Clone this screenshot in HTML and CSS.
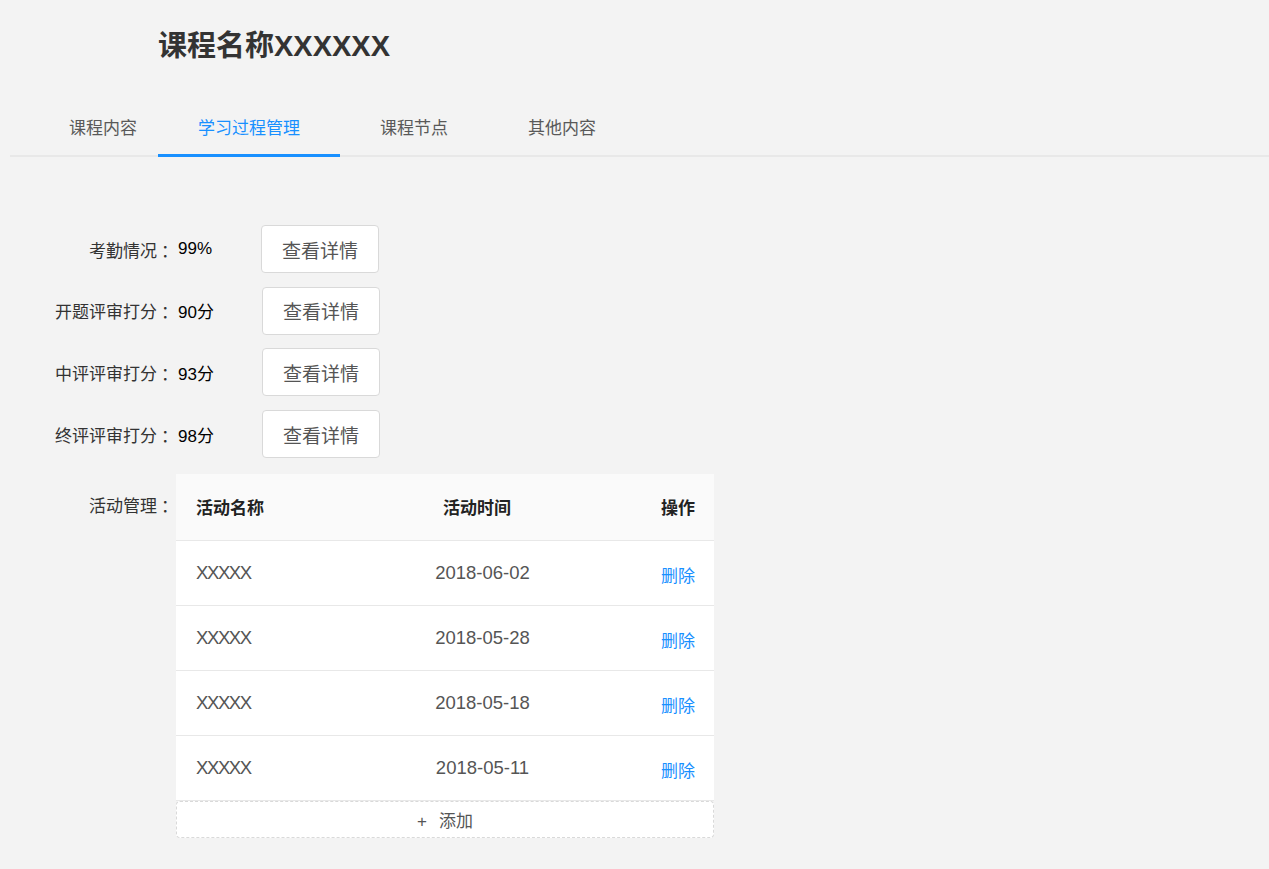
FILE: index.html
```html
<!DOCTYPE html>
<html lang="zh-CN">
<head>
<meta charset="utf-8">
<title>课程名称XXXXXX</title>
<link rel="stylesheet" href="styles.css">
</head>
<body>
<div class="page">
  <h1 class="title">课程名称XXXXXX</h1>
  <div class="tabs">
    <div class="tab tab-first">课程内容</div>
    <div class="tab active">学习过程管理</div>
    <div class="tab">课程节点</div>
    <div class="tab">其他内容</div>
  </div>
  <div class="form">
    <div class="row">
      <div class="label">考勤情况<span class="colon">：</span></div>
      <div class="value value-first">99%</div>
      <button class="btn">查看详情</button>
    </div>
    <div class="row">
      <div class="label">开题评审打分<span class="colon">：</span></div>
      <div class="value">90分</div>
      <button class="btn">查看详情</button>
    </div>
    <div class="row">
      <div class="label">中评评审打分<span class="colon">：</span></div>
      <div class="value">93分</div>
      <button class="btn">查看详情</button>
    </div>
    <div class="row">
      <div class="label">终评评审打分<span class="colon">：</span></div>
      <div class="value">98分</div>
      <button class="btn">查看详情</button>
    </div>
    <div class="row row-table">
      <div class="label label-table">活动管理<span class="colon">：</span></div>
      <div class="table-wrap">
        <div class="table">
          <div class="tr thead">
            <div class="td c1">活动名称</div>
            <div class="td c2 th-time">活动时间</div>
            <div class="td c3">操作</div>
          </div>
          <div class="tr">
            <div class="td c1 xname">XXXXX</div>
            <div class="td c2">2018-06-02</div>
            <div class="td c3"><a class="link">删除</a></div>
          </div>
          <div class="tr">
            <div class="td c1 xname">XXXXX</div>
            <div class="td c2">2018-05-28</div>
            <div class="td c3"><a class="link">删除</a></div>
          </div>
          <div class="tr">
            <div class="td c1 xname">XXXXX</div>
            <div class="td c2">2018-05-18</div>
            <div class="td c3"><a class="link">删除</a></div>
          </div>
          <div class="tr">
            <div class="td c1 xname">XXXXX</div>
            <div class="td c2">2018-05-11</div>
            <div class="td c3"><a class="link">删除</a></div>
          </div>
        </div>
        <button class="add"><span class="plus">+</span>添加</button>
      </div>
    </div>
  </div>
</div>
</body>
</html>
```
FILE: styles.css
```css
* { box-sizing: border-box; }
html, body {
  margin: 0;
  padding: 0;
  background: #f3f3f3;
}
body {
  font-family: "Liberation Sans", "Noto Sans CJK SC", sans-serif;
  color: #333;
  min-height: 869px;
}
.page {
  padding-left: 10px;
}
.title {
  margin: 0;
  padding-top: 26px;
  margin-left: 148px;
  font-size: 29px;
  line-height: 40px;
  font-weight: bold;
  color: #333;
}
.tabs {
  display: flex;
  margin-top: 37px;
  padding-left: 19px;
  border-bottom: 2px solid #e8e8e8;
}
.tab {
  padding: 11px 40px 0;
  height: 54px;
  line-height: 30px;
  font-size: 17px;
  color: #595959;
  margin-bottom: -2px;
  border-bottom: 3px solid transparent;
}
.tab-first {
  padding-right: 21px;
}
.tab.active {
  color: #1890ff;
  border-bottom-color: #1890ff;
}
.form {
  margin-top: 68px;
  display: flex;
  flex-direction: column;
  gap: 13.7px;
}
.row {
  display: flex;
  align-items: center;
}
.label {
  width: 164px;
  text-align: right;
  font-size: 17px;
  color: #333;
  white-space: nowrap;
}
.colon {
  margin-left: 4px;
  margin-right: -4px;
}
.value {
  width: 84px;
  margin-left: 4px;
  font-size: 17px;
  color: #000;
}
.value-first {
  width: 83px;
}
.btn {
  width: 118px;
  height: 48px;
  padding: 0;
  background: #fff;
  border: 1px solid #d9d9d9;
  border-radius: 4px;
  font-family: "Liberation Sans", "Noto Sans CJK SC", sans-serif;
  font-size: 19px;
  color: #555;
}
.row-table {
  align-items: flex-start;
  margin-top: 2px;
}
.label-table {
  line-height: 66px;
}
.table-wrap {
  margin-left: 2px;
  width: 538px;
}
.table {
  background: #fff;
}
.tr {
  display: grid;
  grid-template-columns: 203px 207px 128px;
  height: 65px;
  align-items: center;
  border-bottom: 1px solid #e8e8e8;
  font-size: 18.5px;
  color: #555;
}
.thead {
  height: 67px;
  background: #fafafa;
  font-size: 17px;
  font-weight: bold;
  color: #222;
}
.c1 {
  padding-left: 20px;
}
.c2 {
  text-align: center;
}
.th-time {
  padding-right: 11px;
}
.c3 {
  text-align: right;
  padding-right: 19px;
}
.xname {
  letter-spacing: -1.4px;
}
.link {
  color: #1890ff;
  font-size: 17px;
  position: relative;
  top: 2px;
}
.add {
  display: block;
  width: 538px;
  height: 37px;
  margin-top: 0;
  padding: 0;
  background: #fff;
  border: 1px dashed #d9d9d9;
  border-radius: 4px;
  font-family: "Liberation Sans", "Noto Sans CJK SC", sans-serif;
  font-size: 17px;
  color: #555;
}
.plus {
  margin-right: 12px;
}
```
